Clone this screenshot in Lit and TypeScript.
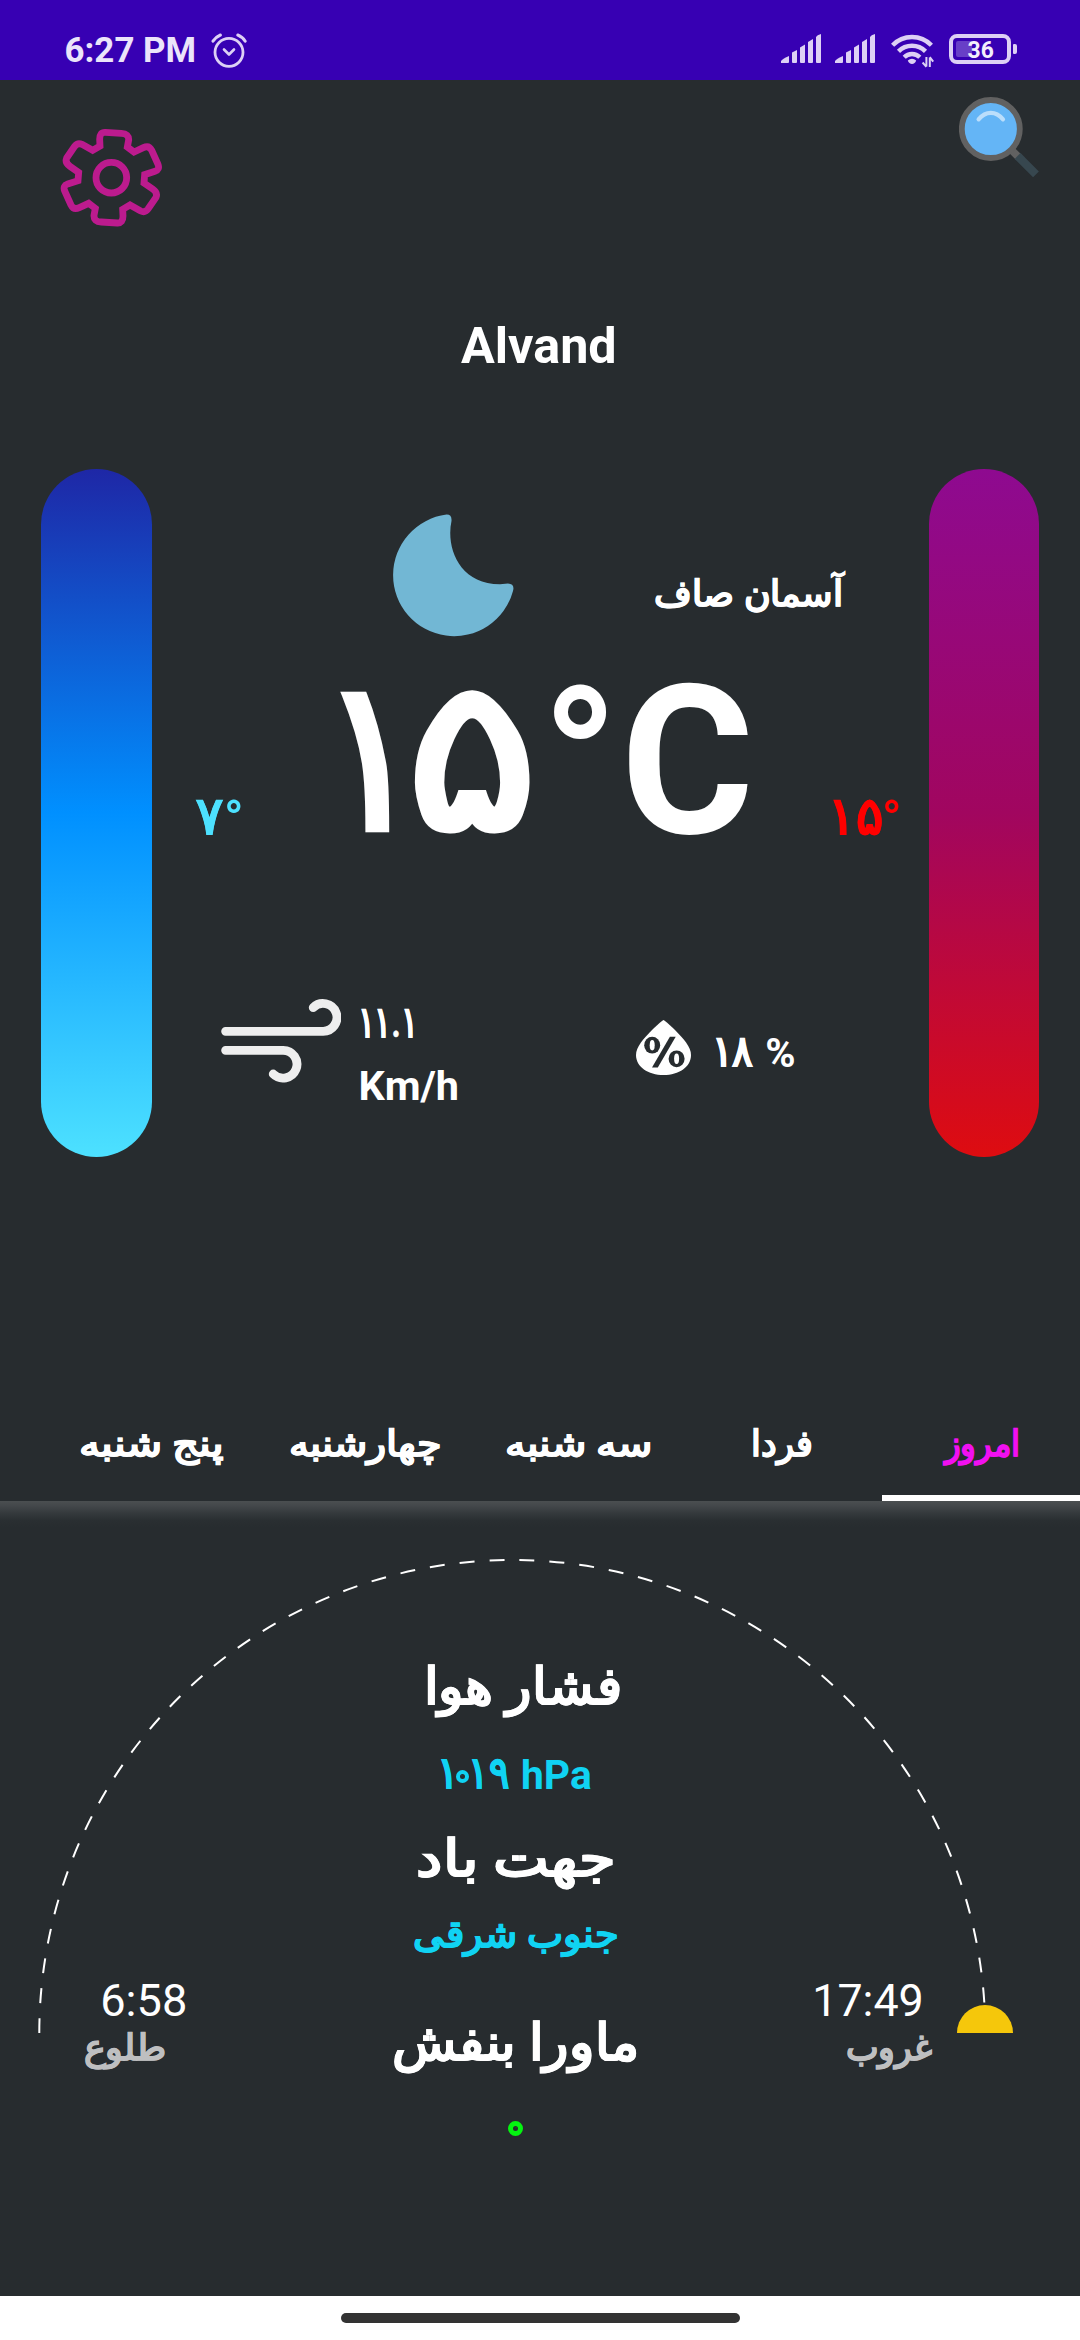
import { LitElement, html, svg, css } from "lit";
import { customElement, property } from "lit/decorators.js";
import { classMap } from "lit/directives/class-map.js";

const FAMILY = "Roboto, sans-serif";
const pen = document.createElement("canvas").getContext("2d")!;

/** One line of text whose visible ink fills exactly `w` pixels. */
@customElement("fit-label")
class FitLabel extends LitElement {
  @property() text = "";
  @property({ type: Number }) size = 36;
  @property({ type: Number }) w = 0;
  @property({ type: Number }) weight = 700;

  static styles = css`
    :host {
      display: block;
      flex: none;
      direction: ltr;
      text-align: left;
      font-family: Roboto, sans-serif;
      white-space: nowrap;
    }
    .box {
      display: flex;
    }
    .ink {
      flex: none;
      transform-origin: 0 0;
    }
  `;

  render() {
    pen.font = `${this.weight} ${this.size * 4}px ${FAMILY}`;
    const m = pen.measureText(this.text);
    const left = -m.actualBoundingBoxLeft / 4;
    const ink = m.actualBoundingBoxRight / 4 - left;
    const s = this.w / ink;
    return html`<div
      class="box"
      style="width:${this.w}px;height:${this.size}px;line-height:${this.size}px;font-size:${this.size}px;font-weight:${this.weight}"
    >
      <span class="ink" style="transform:translateX(${-left * s}px) scaleX(${s})">${this.text}</span>
    </div>`;
  }
}

const label = (cls: string, text: string, size: number, w: number, weight = 700) =>
  html`<fit-label class=${cls} .text=${text} .size=${size} .w=${w} .weight=${weight}></fit-label>`;

const alarmIcon = html`<svg class="alarm" width="36" height="36" viewBox="0 0 36 36" fill="none" stroke="currentColor" stroke-linecap="round" stroke-linejoin="round">
  <circle cx="18" cy="19.3" r="14" stroke-width="2.8" />
  <path d="M13 16.5 18 21.5 23 16.5" stroke-width="2.6" />
  <path d="M2 8.2Q5 3.8 9.4 2M26.8 2Q31.4 3.8 34.2 8.2" stroke-width="3" />
</svg>`;

const signalIcon = (cls: string) => html`<svg class=${cls} width="40" height="30" viewBox="0 0 40 30" fill="currentColor">
  <path d="M0 29V27Q2 24.5 8 22V28Q8 29 7 29H1Q0 29 0 29Z" />
  <path d="M11 28V18.5L16 16V28Q16 29 15 29H12Q11 29 11 28Z" />
  <path d="M19 28V13.5L24 10.5V28Q24 29 23 29H20Q19 29 19 28Z" />
  <path d="M27 28V8L32 5V28Q32 29 31 29H28Q27 29 27 28Z" />
  <path d="M35 28V3Q36 1 40 0V28Q40 29 39 29H36Q35 29 35 28Z" />
</svg>`;

const wifiIcon = html`<svg class="wifi" width="44" height="36" viewBox="0 0 44 36" fill="none" stroke="currentColor">
  <path d="M1.6 12.2A27 27 0 0 1 40.4 12.2" stroke-width="4.4" />
  <path d="M7.5 18.4A19 19 0 0 1 34.5 18.4" stroke-width="4.4" />
  <path d="M13.2 24.2A11 11 0 0 1 28.8 24.2" stroke-width="4.4" />
  <path d="M16.8 27.6Q21 24 25.2 27.6Q24 31 21 31Q18 31 16.8 27.6Z" fill="currentColor" stroke="none" />
  <path d="M35.4 24V33.5M35.4 33.8 31.6 29.5M38.8 34V24.5M38.8 24.2 42.2 28.6" stroke-width="2" />
</svg>`;

const gearIcon = html`<svg class="gear" width="103" height="103" viewBox="30 48 309 309" fill="none" stroke="#bc1b8e" stroke-width="20.5">
  <path d="M128 121 150 108 149 88Q149 66 166 67L214 70Q237 71 236 90L232 111 252 126 280 113Q297 105 305 121L324 163Q330 179 315 184L284 194 282 219 308 237Q324 248 318 262L294 297Q285 309 272 303L240 285 218 298 219 318Q219 340 202 339L154 336Q131 335 132 316L136 295 116 280 88 293Q71 301 63 285L44 243Q38 227 53 222L84 212 86 187 60 169Q44 158 50 144L74 109Q83 97 96 103Z" />
  <circle cx="184" cy="203" r="46" />
</svg>`;

const searchIcon = html`<svg class="search" width="80" height="80" viewBox="0 0 80 80" fill="none">
  <path d="M50 50.5 60 60.5" stroke="#616161" stroke-width="7.5" />
  <path d="M58.6 59 77 77.4" stroke="#37474f" stroke-width="8.2" />
  <circle cx="31.8" cy="32" r="29" fill="#64b5f6" stroke="#616161" stroke-width="5.8" />
  <path d="M19.6 22.3Q25 15.8 31.8 15.8T44 22.3" stroke="#bbdefb" stroke-width="4.2" stroke-linecap="round" />
</svg>`;

const moonIcon = html`<svg class="moon" width="122" height="123" viewBox="0 0 122 123" fill="#72b7d4">
  <path d="M54.5.6Q60 .4 59.5 7C54 32 66 70 108 70.2L116 69.6Q123 70 121 77A61 61 0 1 1 54.5.6Z" />
</svg>`;

const windIcon = html`<svg class="wind" width="120" height="85" viewBox="0 0 120 85" fill="none" stroke="#eee" stroke-width="8.8" stroke-linecap="round">
  <path d="M4.6 32.3H101.6A13.9 13.9 0 1 0 92.2 8.6" />
  <path d="M4.6 51.3H61.8A13.9 13.9 0 1 1 52.2 75" />
</svg>`;

const dropIcon = html`<svg class="drop" width="55" height="55" viewBox="0 0 55 55">
  <path fill="#fff" d="M27.5 0Q29 .6 38 9C48 19 55 27 55 35C55 47 43 55 27.5 55S0 47 0 35C0 27 7 19 17 9Q26 .6 27.5 0Z" />
  <g fill="#272c2f">
    <ellipse cx="16.2" cy="25.2" rx="8" ry="8.4" />
    <ellipse cx="40.6" cy="38.8" rx="8" ry="8.4" />
    <path d="M33.9 16.7H39.7L21.8 47.5H16Z" />
  </g>
  <g fill="#fff">
    <ellipse cx="16.2" cy="25.2" rx="2.5" ry="5.2" />
    <ellipse cx="40.6" cy="38.8" rx="2.5" ry="5.2" />
  </g>
</svg>`;

const days = [
  { name: "امروز", w: 75.6 },
  { name: "فردا", w: 57 },
  { name: "سه شنبه", w: 143 },
  { name: "چهارشنبه", w: 148.5 },
  { name: "پنج شنبه", w: 142 },
];

const sunArc = html`<svg class="arc" width="1080" height="540" viewBox="0 0 1080 540" fill="none">
  ${svg`<path d="M39.3 532A473 473 0 0 1 985.3 532" stroke="#fff" stroke-width="2" stroke-dasharray="15 15" />
  <path d="M957 532A28 28 0 0 1 1013 532Z" fill="#f5c70b" />`}
</svg>`;

@customElement("app-root")
class AppRoot extends LitElement {
  static styles = css`
    :host {
      display: flex;
      flex-direction: column;
      width: 1080px;
      height: 2340px;
      overflow: hidden;
      background: #272c2f;
      color: #fff;
      font-family: Roboto, sans-serif;
    }
    svg {
      display: block;
      flex: none;
    }
    .status {
      display: flex;
      align-items: flex-start;
      height: 80px;
      flex: none;
      background: #3700b3;
      color: #ddd0f5;
    }
    .clock { margin: 32.6px 0 0 66px; color: #ebe4fa; }
    .alarm { margin: 32.5px 0 0 17px; }
    .sim-a { margin: 34px 0 0 534px; }
    .sim-b { margin: 34px 0 0 14px; }
    .wifi { margin: 33px 0 0 16px; }
    .battery {
      display: flex;
      align-items: center;
      margin: 34px 0 0 14px;
    }
    .cell {
      box-sizing: border-box;
      display: flex;
      align-items: center;
      width: 62px;
      height: 30px;
      border: 4px solid currentColor;
      border-radius: 8px;
    }
    .charge {
      width: 16px;
      height: 16px;
      margin-left: 3px;
      border-radius: 2px;
      background: #683fc7;
    }
    .percent { margin: 1px 0 0 -4.5px; color: #f3eefc; }
    .nub {
      width: 4px;
      height: 10px;
      margin-left: 2px;
      border-radius: 1px 2px 2px 1px;
      background: currentColor;
    }
    .toolbar {
      display: flex;
      align-items: flex-start;
      justify-content: space-between;
      height: 241px;
      flex: none;
      padding: 0 41px 0 60px;
      box-sizing: border-box;
    }
    .gear { margin-top: 46px; }
    .search { margin-top: 17px; }
    .city { margin-left: 461px; }
    .hero {
      display: flex;
      height: 688px;
      flex: none;
      margin: 98px 41px 0;
    }
    .pill {
      width: 111px;
      flex: none;
      border-radius: 56px;
    }
    .cold { background: linear-gradient(#1e27a6, #0090ff 50%, #4de1ff); }
    .warm {
      width: 110px;
      background: linear-gradient(#8e0a90, #a1065f 50%, #de0c10);
    }
    .now { width: 777px; flex: none; }
    .sky, .temps, .facts {
      display: flex;
      align-items: flex-start;
    }
    .condition, .low, .high, .speed, .hum, .tab, .rise-name, .set-name, .details {
      -webkit-text-stroke: 0.6px currentColor;
    }
    .unit, .hpa-unit, .zero { -webkit-text-stroke: 0; }
    .sky { height: 211px; padding: 45px 0 0 240px; box-sizing: border-box; }
    .condition { margin: 61.7px 0 0 142.4px; }
    .temps { height: 319px; }
    .low { margin: 111.3px 0 0 43.5px; }
    .low-deg { margin: 114px 0 0 4.5px; }
    .blue { color: #4de1ff; }
    .red { color: #f00; }
    .big { display: flex; margin: -28px 0 0 99.4px; }
    .one { letter-spacing: -36px; }
    .five { margin-left: 24.3px; }
    .big-deg { margin: -20px 0 0 17.4px; }
    .big-c { margin: -21px 0 0 20px; }
    .high { margin: 111.3px 0 0 85.7px; }
    .high-deg { margin: 114px 0 0 4px; }
    .wind { margin-left: 69px; }
    .speed { margin: 1.8px 0 0 20px; }
    .unit { margin-top: 22.3px; }
    .drop { margin: 21px 0 0 179px; }
    .hum { margin: 30.8px 0 0 25px; }
    .hum-pc { margin: 33.5px 0 0 14px; }
    .tabs {
      direction: rtl;
      display: grid;
      grid-template-columns: 198px 199px 210px 216px 210px;
      height: 121px;
      flex: none;
      margin-top: 223px;
    }
    .tab {
      display: flex;
      justify-content: center;
      box-sizing: border-box;
      padding-top: 46px;
      border-bottom: 6px solid transparent;
    }
    .tab.on { color: #f010f0; border-bottom-color: #fff; }
    .panel {
      display: grid;
      grid-template-columns: 215px 600px 265px;
      grid-template-rows: 795px;
      flex: none;
      background: linear-gradient(#4b4f51, #43474a 5px, #33383b 13px, #2a2f32 19px, #272c2f 26px);
    }
    .arc { grid-area: 1 / 1 / 2 / 4; }
    .rise { grid-area: 1 / 1; padding-top: 477px; }
    .set { grid-area: 1 / 3; padding-top: 477px; }
    .muted { color: #bebfc0; }
    .rise-time { margin-left: 103px; }
    .rise-name { margin: 7px 0 0 85px; }
    .set-time { margin-left: 1px; }
    .set-name { margin: 7px 0 0 32px; }
    .details {
      grid-area: 1 / 2;
      display: flex;
      flex-direction: column;
      align-items: center;
      padding-top: 160px;
    }
    .cyan { color: #10d3f3; }
    .pressure { margin-left: 16px; }
    .hpa {
      display: flex;
      align-items: flex-start;
      margin: 39px 0 0 1px;
    }
    .zero {
      box-sizing: border-box;
      width: 13px;
      height: 13px;
      overflow: hidden;
      border: 4.5px solid currentColor;
      border-radius: 50%;
      font-size: 4px;
      line-height: 4px;
      text-align: center;
    }
    .hpa .zero { margin: 19px 3px 0 5px; }
    .hpa-unit { margin: 3.5px 0 0 15px; }
    .direction { margin-top: 37px; }
    .compass { margin: 31.8px 0 0 1px; }
    .uv { margin-top: 64px; }
    .green {
      width: 15px;
      height: 15px;
      margin: 53px 0 0 1px;
      border-width: 5px;
      color: #04f410;
    }
    .navbar {
      display: flex;
      justify-content: center;
      flex: 1;
      background: #fff;
    }
    .handle {
      width: 399px;
      height: 10px;
      margin-top: 17px;
      border-radius: 5px;
      background: #333;
    }
  `;

  render() {
    return html`
      <div class="status">
        ${label("clock", "6:27 PM", 35, 128)} ${alarmIcon} ${signalIcon("sim-a")} ${signalIcon("sim-b")} ${wifiIcon}
        <div class="battery">
          <div class="cell"><div class="charge"></div>${label("percent", "36", 24, 25)}</div>
          <div class="nub"></div>
        </div>
      </div>
      <div class="toolbar">${gearIcon}${searchIcon}</div>
      ${label("city", "Alvand", 50, 153)}
      <div class="hero">
        <div class="pill cold"></div>
        <div class="now">
          <div class="sky">${moonIcon}${label("condition", "آسمان صاف", 36, 189)}</div>
          <div class="temps">
            ${label("low blue", "۷", 52, 27)} ${label("low-deg blue", "°", 50, 13.6)}
            <div class="big">${label("one", "۱", 211, 50)}${label("five", "۵", 211, 119.7)}</div>
            ${label("big-deg", "°", 205, 55.5)} ${label("big-c", "C", 207, 121)}
            ${label("high red", "۱۵", 52, 47.5)} ${label("high-deg red", "°", 50, 13.6)}
          </div>
          <div class="facts">
            ${windIcon}
            <div>${label("speed", "۱۱.۱", 43, 51)} ${label("speed unit", "Km/h", 41, 96)}</div>
            ${dropIcon} ${label("hum", "۱۸", 43, 37)} ${label("hum-pc", "%", 41, 27)}
          </div>
        </div>
        <div class="pill warm"></div>
      </div>
      <nav class="tabs">
        ${days.map((d, i) => html`<div class=${classMap({ tab: true, on: i === 0 })}>${label("", d.name, 36, d.w)}</div>`)}
      </nav>
      <section class="panel">
        ${sunArc}
        <div class="rise">${label("rise-time", "6:58", 45, 82, 400)} ${label("rise-name muted", "طلوع", 36, 79)}</div>
        <div class="details">
          ${label("pressure", "فشار هوا", 51, 190)}
          <div class="hpa cyan">
            ${label("", "۱", 44, 10)}<div class="zero">۰</div>${label("", "۱۹", 44, 36)}${label("hpa-unit", "hPa", 41, 67.5)}
          </div>
          ${label("direction", "جهت باد", 51, 192)} ${label("compass cyan", "جنوب شرقی", 38, 201)}
          ${label("uv", "ماورا بنفش", 51, 242)}
          <div class="zero green">۰</div>
        </div>
        <div class="set">${label("set-time", "17:49", 45, 105, 400)} ${label("set-name muted", "غروب", 36, 85)}</div>
      </section>
      <div class="navbar"><div class="handle"></div></div>
    `;
  }
}
